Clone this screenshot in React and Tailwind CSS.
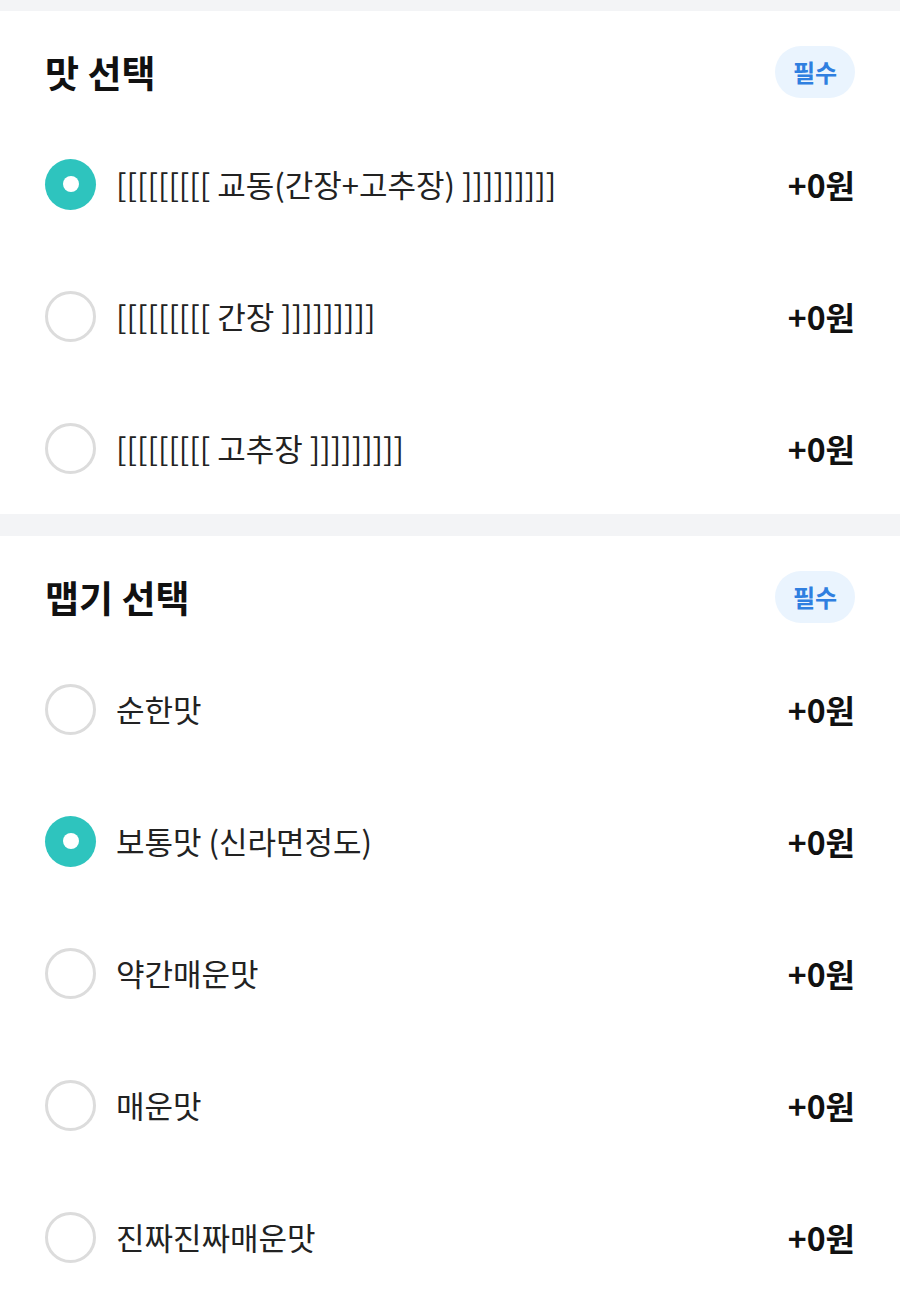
import React from "react";

const sections = [
  {
    title: "맛 선택",
    options: [
      { label: "[[[[[[[[[ 교동(간장+고추장) ]]]]]]]]]", price: "+0원", checked: true },
      { label: "[[[[[[[[[ 간장 ]]]]]]]]]", price: "+0원" },
      { label: "[[[[[[[[[ 고추장 ]]]]]]]]]", price: "+0원" },
    ],
  },
  {
    title: "맵기 선택",
    options: [
      { label: "순한맛", price: "+0원" },
      { label: "보통맛 (신라면정도)", price: "+0원", checked: true },
      { label: "약간매운맛", price: "+0원" },
      { label: "매운맛", price: "+0원" },
      { label: "진짜진짜매운맛", price: "+0원" },
    ],
  },
];

const Radio = ({ checked }) =>
  checked ? (
    <span className="flex h-[51px] w-[51px] shrink-0 items-center justify-center rounded-full bg-[#2ec4be]">
      <span className="h-[16px] w-[16px] rounded-full bg-white"></span>
    </span>
  ) : (
    <span className="h-[51px] w-[51px] shrink-0 rounded-full border-[3px] border-[#dcdcdc] bg-white"></span>
  );

const App = () => {
  return (
    <div
      className="min-h-[1299px] bg-[#f3f4f6] pt-[11px]"
      style={{ fontFamily: '"Noto Sans CJK KR", "Noto Sans", sans-serif' }}
    >
      {sections.map((s, i) => (
        <div key={i} className="mb-[22px] bg-white px-[45px]">
          {/* Header */}
          <div className="flex items-center justify-between pt-[35px] pb-[20px]">
            <h2 className="text-[37px] font-bold leading-[52px] text-[#111]">{s.title}</h2>
            <span className="flex h-[52px] w-[80px] items-center justify-center rounded-full bg-[#eaf4fe] text-[24px] font-bold text-[#2f7fe0]">
              필수
            </span>
          </div>

          {s.options.map((o, j) => (
            <div key={j} className="flex h-[132px] items-center justify-between">
              <div className="flex items-center gap-[20px]">
                <Radio checked={o.checked} />
                <span className="text-[31px] leading-[40px] text-[#222]">{o.label}</span>
              </div>
              <span className="text-[32px] font-bold leading-[40px] text-[#111]">{o.price}</span>
            </div>
          ))}
        </div>
      ))}
    </div>
  );
};

export default App;
